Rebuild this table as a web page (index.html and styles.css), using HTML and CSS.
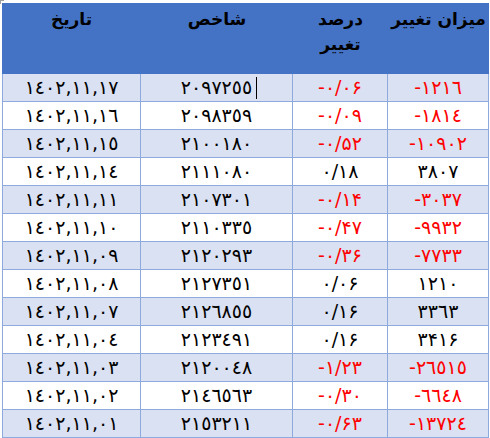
FILE: index.html
```html
<!DOCTYPE html>
<html lang="fa">
<head>
<meta charset="utf-8">
<link rel="stylesheet" href="styles.css">
</head>
<body>
<div class="corner"></div>
<div class="sheet">
  <div class="h">تاریخ</div>
  <div class="h">شاخص</div>
  <div class="h">درصد<br>تغییر</div>
  <div class="h">میزان تغییر</div>

  <div class="c d s">١٤٠٢,١١,١٧</div><div class="c i s cur">٢٠٩٧٢٥٥<span class="caret"></span></div><div class="c p s r">-۰/۰۶</div><div class="c s r">-١٢١٦</div>
  <div class="c d">١٤٠٢,١١,١٦</div><div class="c i">٢٠٩٨٣٥٩</div><div class="c p r">-۰/۰۹</div><div class="c r">-١٨١٤</div>
  <div class="c d s">١٤٠٢,١١,١٥</div><div class="c i s">٢١٠٠١٨٠</div><div class="c p s r">-۰/۵۲</div><div class="c s r">-١٠٩٠٢</div>
  <div class="c d">١٤٠٢,١١,١٤</div><div class="c i">٢١١١٠٨٠</div><div class="c p">۰/۱۸</div><div class="c">٣٨٠٧</div>
  <div class="c d s">١٤٠٢,١١,١١</div><div class="c i s">٢١٠٧٣٠١</div><div class="c p s r">-۰/۱۴</div><div class="c s r">-٣٠٣٧</div>
  <div class="c d">١٤٠٢,١١,١٠</div><div class="c i">٢١١٠٣٣٥</div><div class="c p r">-۰/۴۷</div><div class="c r">-٩٩٣٢</div>
  <div class="c d s">١٤٠٢,١١,٠٩</div><div class="c i s">٢١٢٠٢٩٣</div><div class="c p s r">-۰/۳۶</div><div class="c s r">-٧٧٣٣</div>
  <div class="c d">١٤٠٢,١١,٠٨</div><div class="c i">٢١٢٧٣٥١</div><div class="c p">۰/۰۶</div><div class="c">١٢١٠</div>
  <div class="c d s">١٤٠٢,١١,٠٧</div><div class="c i s">٢١٢٦٨٥٥</div><div class="c p s">۰/۱۶</div><div class="c s">٣٣٦٣</div>
  <div class="c d">١٤٠٢,١١,٠٤</div><div class="c i">٢١٢٣٤٩١</div><div class="c p">۰/۱۶</div><div class="c">۳۴۱۶</div>
  <div class="c d s">١٤٠٢,١١,٠٣</div><div class="c i s">٢١٢٠٠٤٨</div><div class="c p s r">-۱/۲۳</div><div class="c s r">-٢٦٥١٥</div>
  <div class="c d">١٤٠٢,١١,٠٢</div><div class="c i">٢١٤٦٥٦٣</div><div class="c p r">-۰/۳۰</div><div class="c r">-٦٦٤٨</div>
  <div class="c d s">١٤٠٢,١١,٠١</div><div class="c i s">٢١٥٣٢١١</div><div class="c p s r">-۰/۶۳</div><div class="c s r">-١٣٧٢٤</div>
</div>
</body>
</html>
```
FILE: styles.css
```css
html, body {
  margin: 0;
  padding: 0;
  background: #ffffff;
}
body {
  padding: 3px 0 0 2px;
  font-family: "DejaVu Sans", sans-serif;
}
.corner {
  position: absolute;
  left: 0;
  top: 0;
  width: 3px;
  height: 3px;
  border-left: 1px solid #a0a0a0;
  border-top: 1px solid #a0a0a0;
}
.sheet {
  display: grid;
  grid-template-columns: 139px 152px 95px 101px;
  grid-template-rows: 71px;
  grid-auto-rows: 28px;
  width: 487px;
  direction: ltr;
}
.h {
  background: #4472c4;
  color: #000;
  font-weight: bold;
  font-size: 17px;
  line-height: 25px;
  text-align: center;
  direction: rtl;
  padding-top: 4px;
  box-sizing: border-box;
}
.c {
  box-sizing: border-box;
  border-right: 1px solid #8ea9db;
  border-bottom: 1px solid #8ea9db;
  background: #ffffff;
  font-size: 19px;
  letter-spacing: 0.5px;
  line-height: 27px;
  text-align: center;
  color: #000;
  white-space: nowrap;
}
.d {
  letter-spacing: 0;
}
.i {
  letter-spacing: 1px;
}
.p {
  letter-spacing: 2px;
}
.c:nth-child(4n+5) {
  border-left: 1px solid #8ea9db;
}
.s {
  background: #d9e1f2;
}
.r {
  color: #ff0000;
}
.cur {
  position: relative;
}
.caret {
  position: absolute;
  left: 115px;
  top: 3px;
  width: 1px;
  height: 22px;
  background: #000;
}
```
